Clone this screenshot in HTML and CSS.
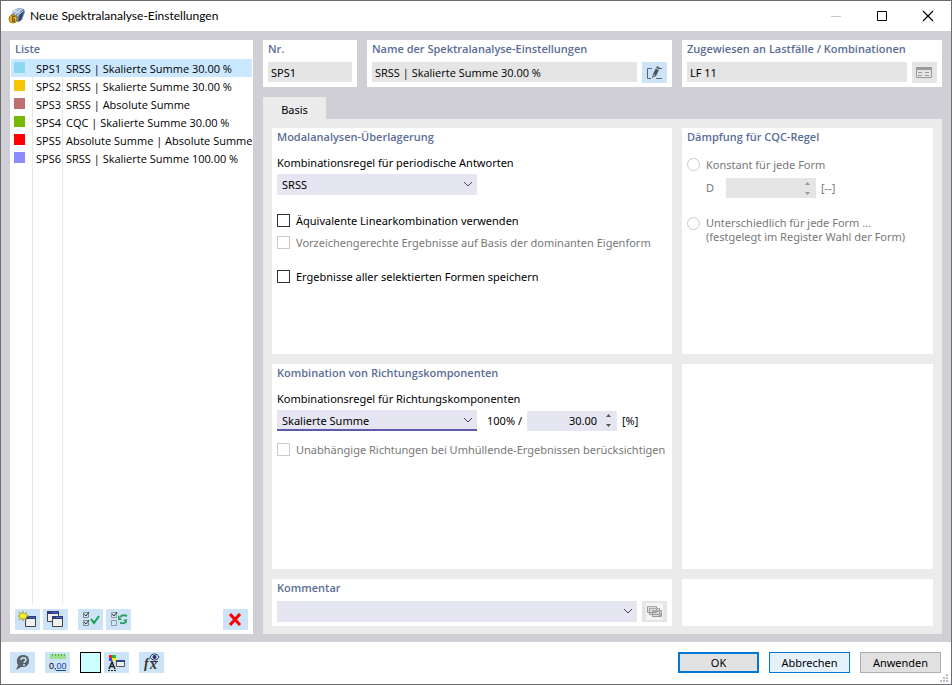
FILE: index.html
```
<!DOCTYPE html>
<html lang="de">
<head>
    <meta charset="UTF-8">
    <meta name="viewport" content="width=device-width, initial-scale=1.0">
    <title>Neue Spektralanalyse-Einstellungen</title>
    <link rel="stylesheet" href="styles.css">
</head>
<body>
    <header class="titlebar">
        <svg class="app-icon" width="18" height="18" viewBox="0 0 18 18">
            <path d="M3 8l2-4 5-3 6 1 1 3-3 8-4 2-5-2z" fill="#6d89b0"/>
            <path d="M5 4l5-3 5 1-4 4-4 2z" fill="#a3b9d6"/>
            <path d="M16 4l-3 9-3 2 2-9z" fill="#33466a"/>
            <path d="M4 7l5-5M7 8l6-6M6 4l6 2M9 9l6-5" stroke="#d5e0ee" fill="none"/>
            <circle cx="5" cy="12" r="4" fill="#e5b41f" stroke="#a37b12"/>
            <path d="M7 9.500H4.500v5h2v-2.500h-2" stroke="#6e4e08" fill="none"/>
        </svg>
        <h1>Neue Spektralanalyse-Einstellungen</h1>
        <div class="win-btns">
            <button type="button" aria-label="Minimieren" disabled><svg width="12" height="12"><path d="M1 6.500h10" stroke="#c4c4c4"/></svg></button>
            <button type="button" aria-label="Maximieren"><svg width="12" height="12"><path d="M1.500 1.500h9v9h-9z" stroke="#000" fill="none"/></svg></button>
            <button type="button" aria-label="Schließen"><svg width="12" height="12"><path d="M1 1l10 10M11 1L1 11" stroke="#000" stroke-width="1.200"/></svg></button>
        </div>
    </header>

    <main class="main">
        <!-- Liste -->
        <section class="list box">
            <h2>Liste</h2>
            <div class="list-body">
                <table>
                    <tr class="active"><td><i class="c1"></i></td><td>SPS1</td><td>SRSS | Skalierte Summe 30.00 %</td></tr>
                    <tr><td><i class="c2"></i></td><td>SPS2</td><td>SRSS | Skalierte Summe 30.00 %</td></tr>
                    <tr><td><i class="c3"></i></td><td>SPS3</td><td>SRSS | Absolute Summe</td></tr>
                    <tr><td><i class="c4"></i></td><td>SPS4</td><td>CQC | Skalierte Summe 30.00 %</td></tr>
                    <tr><td><i class="c5"></i></td><td>SPS5</td><td>Absolute Summe | Absolute Summe</td></tr>
                    <tr><td><i class="c6"></i></td><td>SPS6</td><td>SRSS | Skalierte Summe 100.00 %</td></tr>
                </table>
            </div>
            <div class="tools">
                <button type="button" class="tool" aria-label="Neu">
                    <svg width="19" height="17" viewBox="0 0 19 17">
                        <path d="M7.500 6.500h10v9h-10z" fill="#f0f0f0" stroke="#444"/>
                        <path d="M7 5h11v3H7z" fill="#333c6b"/><path d="M11 6h6v1h-6z" fill="#3a5cff"/>
                        <path d="M5 0l1 3 3-2-1 3 3 1-3 1 1 3-3-2-1 3-1-3-3 2 1-3-3-1 3-1-1-3 3 2z" fill="#f7ee2b" stroke="#85801c" stroke-width=".5"/>
                    </svg>
                </button>
                <button type="button" class="tool" aria-label="Kopieren">
                    <svg width="19" height="17" viewBox="0 0 19 17">
                        <path d="M1.500 1.500h11v9h-11z" fill="#f0f0f0" stroke="#444"/>
                        <path d="M1 0h12v3H1z" fill="#333c6b"/><path d="M6 1h6v1H6z" fill="#3a5cff"/>
                        <path d="M6.500 6.500h10v9h-10z" fill="#f0f0f0" stroke="#444"/>
                        <path d="M6 5h11v3H6z" fill="#333c6b"/><path d="M10 6h6v1h-6z" fill="#3a5cff"/>
                    </svg>
                </button>
                <button type="button" class="tool sep" aria-label="Alle auswählen">
                    <svg width="19" height="17" viewBox="0 0 19 17" fill="none">
                        <path d="M2.500 1.500h5v5h-5zM2.500 9.500h5v5h-5z" stroke="#888"/>
                        <path d="M3 3l2 2 3-4M3 11l2 2 3-4" stroke="#333"/>
                        <path d="M10 8l3 4 5-7" stroke="#10a64a" stroke-width="2"/>
                    </svg>
                </button>
                <button type="button" class="tool" aria-label="Auswahl umkehren">
                    <svg width="19" height="17" viewBox="0 0 19 17" fill="none">
                        <path d="M2.500 1.500h5v5h-5zM2.500 9.500h5v5h-5z" stroke="#999"/>
                        <path d="M3 3l2 2 3-4" stroke="#333"/>
                        <path d="M11 6c2-2 5-2 7-1M17 11c-2 2-4 1-6 1" stroke="#2ba562" stroke-width="2"/>
                        <path d="M9 4v5h4zM18 12V8l-4 1z" fill="#2ba562"/>
                    </svg>
                </button>
                <button type="button" class="tool last" aria-label="Löschen">
                    <svg width="13" height="13" viewBox="0 0 13 13"><path d="M1 1l10 11M11 1L1 12" stroke="#f00" stroke-width="3"/></svg>
                </button>
            </div>
        </section>

        <div class="content">
            <div class="head">
                <section class="box">
                    <h2><label for="nr">Nr.</label></h2>
                    <div class="row"><input class="field" id="nr" type="text" value="SPS1" readonly></div>
                </section>
                <section class="box">
                    <h2><label for="name">Name der Spektralanalyse-Einstellungen</label></h2>
                    <div class="row">
                        <input class="field" id="name" type="text" value="SRSS | Skalierte Summe 30.00 %" readonly>
                        <button type="button" class="tool" aria-label="Name bearbeiten">
                            <svg width="17" height="16" viewBox="0 0 17 16" fill="none">
                                <path d="M6 3.500H1.500v10H5M10 13.500h6M13 3.500h3" stroke="#5b6670"/>
                                <path d="M6 13l1-4 4-8 3 2-4 8z" fill="#505459"/><path d="M7 12l1-3 1 1z" fill="#cde3f7"/><path d="M10 3l3 2" stroke="#cde3f7"/>
                            </svg>
                        </button>
                    </div>
                </section>
                <section class="box">
                    <h2><label for="lf">Zugewiesen an Lastfälle / Kombinationen</label></h2>
                    <div class="row">
                        <input class="field" id="lf" type="text" value="LF 11" readonly>
                        <button type="button" class="tool gray" aria-label="Zuweisen">
                            <svg width="17" height="13" viewBox="0 0 17 13" fill="none">
                                <path d="M.5 1.500h15v10H.5z" stroke="#999"/><path d="M0 1h16v3H0z" fill="#999"/>
                                <path d="M2 6.500h4M2 9.500h4M9 6.500h4M9 9.500h4" stroke="#999"/>
                            </svg>
                        </button>
                    </div>
                </section>
            </div>

            <nav class="tabs"><button type="button" class="tab">Basis</button></nav>

            <div class="panes">
                <section class="box">
                    <h2>Modalanalysen-Überlagerung</h2>
                    <label class="caption" for="rule1">Kombinationsregel für periodische Antworten</label>
                    <div class="combo">
                        <select id="rule1"><option>SRSS</option></select>
                        <svg class="arrow" width="10" height="6"><path d="M1 1l4 4 4-4" stroke="#444" fill="none"/></svg>
                    </div>
                    <label class="check first"><input type="checkbox">Äquivalente Linearkombination verwenden</label>
                    <label class="check off"><input type="checkbox" disabled>Vorzeichengerechte Ergebnisse auf Basis der dominanten Eigenform</label>
                    <label class="check first"><input type="checkbox">Ergebnisse aller selektierten Formen speichern</label>
                </section>

                <section class="box">
                    <h2>Dämpfung für CQC-Regel</h2>
                    <label class="radio"><input type="radio" name="damp" disabled>Konstant für jede Form</label>
                    <div class="row damp">
                        <label for="d">D</label>
                        <div class="spin off">
                            <input id="d" type="text" disabled>
                            <svg width="7" height="13"><path d="M1 3h5L3.500 0zM1 10h5l-2.500 3z" fill="#999"/></svg>
                        </div>
                        <span>[--]</span>
                    </div>
                    <label class="radio"><input type="radio" name="damp" disabled><span>Unterschiedlich für jede Form ...<br>(festgelegt im Register Wahl der Form)</span></label>
                </section>

                <section class="box">
                    <h2>Kombination von Richtungskomponenten</h2>
                    <label class="caption" for="rule2">Kombinationsregel für Richtungskomponenten</label>
                    <div class="row direction">
                        <div class="combo focus">
                            <select id="rule2"><option>Skalierte Summe</option></select>
                            <svg class="arrow" width="10" height="6"><path d="M1 1l4 4 4-4" stroke="#444" fill="none"/></svg>
                        </div>
                        <label class="percent" for="p">100% /</label>
                        <div class="spin">
                            <input id="p" type="text" value="30.00">
                            <svg width="7" height="13"><path d="M1 3h5L3.500 0zM1 10h5l-2.500 3z" fill="#555"/></svg>
                        </div>
                        <span>[%]</span>
                    </div>
                    <label class="check off indep"><input type="checkbox" disabled>Unabhängige Richtungen bei Umhüllende-Ergebnissen berücksichtigen</label>
                </section>

                <section class="box"></section>

                <section class="box">
                    <h2><label for="comment">Kommentar</label></h2>
                    <div class="row">
                        <div class="combo wide">
                            <select id="comment"><option></option></select>
                            <svg class="arrow" width="10" height="6"><path d="M1 1l4 4 4-4" stroke="#444" fill="none"/></svg>
                        </div>
                        <button type="button" class="tool gray" aria-label="Kommentare">
                            <svg width="17" height="17" viewBox="0 0 17 17">
                                <path d="M0 0h17v17H0z" fill="#f4f4f4"/>
                                <path d="M1.500 3.500h9v6h-9zM3.500 5.500h10v6h-10zM6.500 7.500h9v6h-9z" fill="#ddd" stroke="#999"/>
                                <path d="M1 3h10v1H1zM3 5h11v1H3zM6 7h10v2H6zM12 13l3-3v3z" fill="#aaa"/>
                            </svg>
                        </button>
                    </div>
                </section>

                <section class="box"></section>
            </div>
        </div>
    </main>

    <footer class="footer">
        <button type="button" class="tool" aria-label="Hilfe">
            <svg width="17" height="17" viewBox="0 0 17 17">
                <path d="M9 1c4 0 6 2 6 6s-3 6-6 6H7l-5 3 2-5C1 6 4 1 9 1z" fill="#59636c"/>
                <path d="M7 6c0-3 5-3 5 0 0 2-2 1-2 3M9 11h2" stroke="#cde3f7" stroke-width="1.500" fill="none"/>
            </svg>
        </button>
        <button type="button" class="tool sep" aria-label="Einheiten">
            <svg width="19" height="19" viewBox="0 0 19 19">
                <path d="M2 1h16v5H2z" fill="#9be08c"/><path d="M4.500 1v2M7.500 1v2M10.500 1v2M13.500 1v2M16.500 1v2" stroke="#5fae52"/>
                <text x="1" y="16" class="digits">0,<tspan fill="#1c4a9c">00</tspan></text>
                <path d="M8 17.500h10" stroke="#1c4a9c"/>
            </svg>
        </button>
        <button type="button" class="swatch sep" aria-label="Farbe"></button>
        <button type="button" class="tool" aria-label="Anzeige">
            <svg width="19" height="18" viewBox="0 0 19 18">
                <path d="M2 1h3v3H2z" fill="#f22"/><path d="M5 1h4v3H5z" fill="#2b2"/><path d="M2 4h3v3H2z" fill="#44f"/><path d="M5 4h4v3H5z" fill="#ee2"/>
                <path d="M2 15l3-7 3 7M3 12.500h4" stroke="#222" stroke-width="1.500" fill="none"/>
                <path d="M1 16h2v1H1zM4 16h2v1H4zM7 16h2v1H7z" fill="#222"/>
                <path d="M9.500 7.500h8v5h-8z" fill="#eee" stroke="#556"/><path d="M9 6h9v2H9z" fill="#33448f"/>
            </svg>
        </button>
        <button type="button" class="tool sep" aria-label="Formel">
            <svg width="19" height="19" viewBox="0 0 19 19">
                <text x="2" y="15" class="fx">f</text><text x="8" y="16" class="fx">x</text><path d="M8 8.500h8" stroke="#333"/>
                <path d="M8 4c2-4 7-4 9 0-2 4-7 4-9 0z" fill="#dce5f7" stroke="#26336f"/><circle cx="12.500" cy="4" r="2" fill="#26336f"/>
            </svg>
        </button>
        <div class="actions">
            <button type="button" class="btn ok">OK</button>
            <button type="button" class="btn hot">Abbrechen</button>
            <button type="button" class="btn">Anwenden</button>
        </div>
        <svg class="grip" width="9" height="9"><path d="M6 0h2v2H6zM3 3h2v2H3zM6 3h2v2H6zM0 6h2v2H0zM3 6h2v2H3zM6 6h2v2H6z" fill="#bbb"/></svg>
    </footer>
</body>
</html>
```
FILE: styles.css
```
*{box-sizing:border-box;padding:0;margin:0}
body{
    min-height:100vh;
    display:flex;
    flex-direction:column;
    border:1px solid #6c6c6e;
    background:#fff;
    color:#000;
    font:11px/16px "Noto Sans","Open Sans",sans-serif;
}
button,input,select{
    font:inherit;
    color:inherit;
    border:0;
    border-radius:0;
    outline:0;
}
svg{display:block}
.titlebar{
    display:flex;
    align-items:center;
    height:30px;
    padding-left:7px;
}
.titlebar h1{
    flex:1;
    margin-left:4px;
    font:12px/18px Lato,"Open Sans",sans-serif;
}
.win-btns{display:flex}
.win-btns button{
    display:flex;
    align-items:center;
    justify-content:center;
    width:46px;
    height:28px;
    background:none;
}
.main{
    flex:1;
    display:flex;
    gap:10px;
    padding:9px 9px 8px;
    background:#d0cfd5;
}
.box{
    min-width:0;
    padding:0 5px 4px;
    background:#fff;
}
h2{
    height:18px;
    font:600 11px/18px "Open Sans","Noto Sans",sans-serif;
    color:#5b6d96;
    white-space:nowrap;
}

/* Liste */
.list{
    flex:0 0 243px;
    display:flex;
    flex-direction:column;
}
.list-body{
    flex:1;
    margin:1px -4px 5px;
    background:linear-gradient(#e8e8e8,#e8e8e8) 21px 0/1px 100% no-repeat,
               linear-gradient(#e8e8e8,#e8e8e8) 51px 0/1px 100% no-repeat;
}
.list table{
    width:100%;
    table-layout:fixed;
    border-collapse:collapse;
    font-family:"Open Sans","Noto Sans",sans-serif;
}
.list td{
    height:18px;
    line-height:17px;
    white-space:nowrap;
    padding:1px 0 0 3px;
}
.list td:first-child{width:22px}
.list td:nth-child(2){width:30px}
.list .active{background:#cce8ff}
.list i{
    display:block;
    width:11px;
    height:11px;
    margin-bottom:3px;
}
.c1{background:#8ed8f4}
.c2{background:#f6c400}
.c3{background:#bc7070}
.c4{background:#77b800}
.c5{background:#f00}
.c6{background:#8c8cff}
.tools{
    display:flex;
    gap:3px;
}
.tool{
    flex:none;
    display:flex;
    align-items:center;
    justify-content:center;
    width:25px;
    height:21px;
    background:#cde3f7;
}
.tool.gray{background:#e5e5e5}
.tools .sep{margin-left:7px}
.tools .last{margin-left:auto}

/* Kopfbereich */
.content{
    flex:1;
    min-width:0;
    display:flex;
    flex-direction:column;
}
.head{
    display:grid;
    grid-template-columns:94px 1fr 260px;
    gap:10px;
}
.head .row{margin-top:4px}
.row{
    display:flex;
    gap:5px;
}
.field{
    flex:1;
    min-width:0;
    height:20px;
    padding:0 3px;
    background:#e5e5e5;
}
#name{font-family:"Open Sans","Noto Sans",sans-serif}
.head .box{height:47px}
.tabs{margin-top:10px}
.tab{
    display:block;
    width:63px;
    height:22px;
    padding-top:4px;
    background:#ebebeb;
}
.panes{
    flex:1;
    display:grid;
    grid-template-columns:1fr 251px;
    grid-template-rows:226fr 205fr 47px;
    gap:10px;
    padding:9px 9px 8px;
    background:#ebebeb;
}
.panes .box:nth-child(5) .row{margin-top:4px}

.caption{
    display:block;
    margin:9px 0 3px;
}
.combo{
    position:relative;
    width:200px;
    height:21px;
}
.combo.wide{
    flex:1;
    width:auto;
}
.combo select{
    appearance:none;
    display:block;
    width:100%;
    height:100%;
    padding:0 20px 0 5px;
    background:#e6e6f2;
}
.combo.focus select{
    padding-top:2px;
    border-bottom:2px solid #5b5ba9;
}
.arrow{
    position:absolute;
    right:4px;
    top:7px;
    pointer-events:none;
}
.check,.radio{
    display:flex;
    gap:6px;
    white-space:nowrap;
}
.check{margin-top:6px}
.check.first{margin-top:18px}
.check.indep{margin-top:11px}
.check input,.radio input{
    appearance:none;
    flex:none;
    width:13px;
    height:13px;
    margin-top:1px;
    border:1px solid #333;
    background:#fff;
}
.check.off,.radio,.damp{color:#787878}
.check.off input,.radio input{border-color:#ccc}
.radio input{border-radius:50%}
.radio{
    margin-top:11px;
    line-height:14px;
}
.panes h2 + .radio{
    line-height:16px;
}
.damp{
    align-items:center;
    margin:5px 0 18px 19px;
}
.damp label{width:15px}
.spin{
    display:flex;
    align-items:center;
    width:90px;
    height:20px;
    padding-right:5px;
    background:#e6e6f2;
}
.spin.off{background:#e5e5e5}
.spin input{
    flex:1;
    min-width:0;
    margin-right:8px;
    text-align:right;
    background:none;
}
.direction{align-items:center}
.direction .percent{
    width:35px;
    margin-left:5px;
    white-space:nowrap;
}

/* Fußzeile */
.footer{
    position:relative;
    display:flex;
    align-items:center;
    height:42px;
    padding:0 10px 1px 9px;
}
.footer .sep{margin-left:10px}
.swatch{
    width:21px;
    height:21px;
    margin-right:3px;
    border:1px solid #000;
    background:#cff;
}
.digits{
    font:9px "Liberation Sans",sans-serif;
}
.fx{
    font:italic bold 14px "Liberation Serif",serif;
    fill:#333;
}
.actions{
    display:flex;
    gap:10px;
    margin-left:auto;
}
.btn{
    width:81px;
    height:21px;
    border:1px solid #adadad;
    background:#e1e1e1;
}
.btn.ok{border:2px solid #0078d7}
.btn.hot{
    border-color:#0078d7;
    background:#e5f1fb;
}
.grip{
    position:absolute;
    right:2px;
    bottom:1px;
}
```
